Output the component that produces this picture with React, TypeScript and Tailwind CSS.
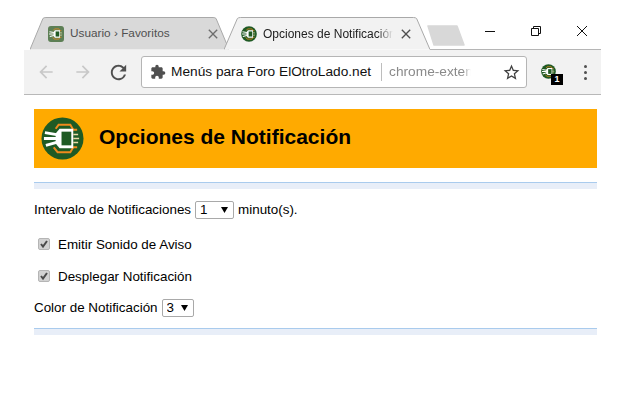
import React from "react";
import { MdArrowBack, MdArrowForward, MdClose, MdExtension, MdRefresh, MdStarBorder } from "react-icons/md";

function Logo({ size, rounded }: { size: number; rounded?: boolean }) {
  return (
    <svg width={size} height={size} viewBox="0 0 44 44" className="shrink-0">
      {rounded ? (
        <rect x="0" y="0" width="44" height="44" rx="8" fill="#5d7f55" />
      ) : (
        <circle cx="22" cy="22" r="21.5" fill="#1f5a24" />
      )}
      {/* orange wires */}
      <path d="M15 12 L18 8 H30 L33 13 H37" fill="none" stroke="#f08a1d" strokeWidth="2" />
      <path d="M13 31 L17 36 H30 L33 31 H37" fill="none" stroke="#f08a1d" strokeWidth="2" />
      {/* plug */}
      <path d="M19 12 H33 V32 H19 L15 27 V17 Z" fill="#fff" />
      <rect x="21" y="15" width="10" height="14" fill="#1f5a24" />
      <path d="M4 16 L16 18 M3 22 H16 M5 29 L16 26" stroke="#fff" strokeWidth="3" fill="none" />
      <path d="M33 18 H38 M33 22 H39 M33 26 H38" stroke="#e9d9a8" strokeWidth="1.5" fill="none" />
    </svg>
  );
}

function TabShape({ fill, stroke }: { fill: string; stroke: string }) {
  return (
    <svg className="absolute inset-0" width="100%" height="100%" viewBox="0 0 100 33" preserveAspectRatio="none">
      <path d="M0 32.5 L6.5 1.5 Q7 0.5 8 0.5 H92 Q93 0.5 93.5 1.5 L100 32.5" fill={fill} stroke={stroke} vectorEffect="non-scaling-stroke" />
    </svg>
  );
}

function SelectBox({ value, width }: { value: string; width: string }) {
  return (
    <span className={`relative inline-block h-[18px] ${width} shrink-0`}>
      <select
        defaultValue={value}
        className="appearance-none w-full h-full bg-white border border-[#a9a9a9] rounded-[2px] pl-[4px] text-[13.4px] leading-none text-black outline-none"
      >
        <option>{value}</option>
      </select>
      <svg className="absolute top-[6px] right-[6px] pointer-events-none" width="7" height="6" viewBox="0 0 7 6">
        <path d="M0 0 H7 L3.5 6 Z" fill="#000" />
      </svg>
    </span>
  );
}

function CheckRow({ label }: { label: string }) {
  return (
    <div className="flex items-center h-[16px]">
      <span className="ml-[4px] w-[12px] h-[12px] rounded-[2px] bg-[#d2d2d2] border border-[#b5b5b5] flex items-center justify-center">
        <svg width="10" height="10" viewBox="0 0 10 10">
          <path d="M2 5 L4 7.5 L8 2" fill="none" stroke="#4a4a4a" strokeWidth="2" />
        </svg>
      </span>
      <span className="ml-[8px] pt-[1px]">{label}</span>
    </div>
  );
}

function Rule() {
  return <div className="h-[7px] bg-[#e8eef8] border-t border-[#a9cbed]" />;
}

export default function App() {
  return (
    <div className="w-[640px] h-[400px] bg-white overflow-hidden font-['Liberation_Sans',Arial,sans-serif] text-black pl-[24px]">
      <div className="w-[577px] h-[400px] flex flex-col">
        {/* tab strip */}
        <div className="h-[50px] pt-[17px] flex items-stretch shrink-0 relative">
          <div className="relative w-[199px] ml-[6px] h-[33px] shrink-0">
            <TabShape fill="#d9d9d9" stroke="#a9a9a9" />
            <div className="relative flex items-center h-full pl-[18px] pr-[8px] text-[11.8px] text-[#505050]">
              <Logo size={16} rounded />
              <span className="ml-[6px] flex-1 whitespace-nowrap">Usuario › Favoritos</span>
              <MdClose size={16} className="text-[#6e6e6e]" />
            </div>
          </div>
          <div className="relative w-[206px] -ml-[5px] h-[33px] shrink-0">
            <TabShape fill="#f2f2f2" stroke="#a9a9a9" />
            <div className="relative flex items-center h-full pl-[17px] pr-[16px] text-[12px] text-[#222]">
              <Logo size={16} />
              <span className="ml-[6px] w-[130px] overflow-hidden whitespace-nowrap [mask-image:linear-gradient(to_right,black_88%,transparent)]">
                Opciones de Notificación
              </span>
              <span className="flex-1" />
              <MdClose size={16} className="text-[#505050]" />
            </div>
          </div>
          {/* new tab button */}
          <svg width="38" height="21" viewBox="0 0 38 21" className="mt-[8px] -ml-[3px] shrink-0">
            <path d="M1 1 H30 L37 20 H7 Z" fill="#d8d8d8" stroke="#d8d8d8" strokeLinejoin="round" strokeWidth="1.5" />
          </svg>
          <div className="flex-1" />
          {/* window controls */}
          <div className="flex items-start pr-[13px] text-[#111]">
            <svg width="12" height="12" viewBox="0 0 12 12" className="mt-[8px] mr-[34px]">
              <path d="M1 6.5 H11" stroke="#111" />
            </svg>
            <svg width="12" height="12" viewBox="0 0 12 12" className="mt-[8px] mr-[34px]">
              <path d="M1.5 3.5 H8.5 V10.5 H1.5 Z M3.5 3.5 V1.5 H10.5 V8.5 H8.5" fill="none" stroke="#111" />
            </svg>
            <svg width="12" height="12" viewBox="0 0 12 12" className="mt-[8px]">
              <path d="M1 1 L11 11 M11 1 L1 11" stroke="#111" />
            </svg>
          </div>
          {/* toolbar top line right of the active tab */}
          <div className="absolute left-[406px] right-0 bottom-0 h-px bg-[#b5b5b5]" />
        </div>

        {/* toolbar */}
        <div className="h-[45px] bg-[#f2f2f2] border-b border-[#b8b8b8] flex items-center shrink-0">
          <MdArrowBack size={20} className="ml-[12px] text-[#c8c8c8]" />
          <MdArrowForward size={20} className="ml-[17px] text-[#c8c8c8]" />
          <MdRefresh size={23} className="ml-[14px] text-[#505050]" />
          <div className="ml-[11px] w-[386px] h-[32px] bg-white border border-[#b5b5b5] rounded-[3px] flex items-center pl-[8px] pr-[5px]">
            <MdExtension size={16} className="text-[#505050]" />
            <span className="ml-[5px] text-[13.7px] text-[#111] whitespace-nowrap">Menús para Foro ElOtroLado.net</span>
            <span className="ml-[10px] w-px h-[18px] bg-[#bdbdbd]" />
            <span className="ml-[7px] text-[13.7px] text-[#8a8a8a] whitespace-nowrap w-[82px] overflow-hidden [mask-image:linear-gradient(to_right,black_90%,transparent)]">
              chrome-extension://
            </span>
            <span className="flex-1" />
            <MdStarBorder size={19} className="text-[#404040]" />
          </div>
          <div className="relative ml-[14px] w-[16px] h-[16px]">
            <Logo size={15} />
            <span className="absolute left-[10px] top-[10px] w-[12px] h-[11px] bg-black text-white text-[9px] font-bold leading-[11px] text-center">1</span>
          </div>
          <div className="ml-[27px] flex flex-col gap-[3px]">
            <span className="w-[3px] h-[3px] rounded-full bg-[#505050]" />
            <span className="w-[3px] h-[3px] rounded-full bg-[#505050]" />
            <span className="w-[3px] h-[3px] rounded-full bg-[#505050]" />
          </div>
        </div>

        {/* page content */}
        <div className="pl-[10px] pr-[4px] pt-[14px] text-[13.4px] leading-none">
          <div className="h-[59px] bg-[#ffaa00] flex items-center pl-[7px]">
            <Logo size={43} />
            <h1 className="ml-[15px] mb-[5px] text-[21px] font-bold">Opciones de Notificación</h1>
          </div>
          <div className="mt-[14px]">
            <Rule />
          </div>
          <div className="mt-[11px] flex items-center h-[20px]">
            <span>Intervalo de Notificaciones</span>
            <span className="ml-[4px]">
              <SelectBox value="1" width="w-[39px]" />
            </span>
            <span className="ml-[4px]">minuto(s).</span>
          </div>
          <div className="mt-[16px]">
            <CheckRow label="Emitir Sonido de Aviso" />
          </div>
          <div className="mt-[16px]">
            <CheckRow label="Desplegar Notificación" />
          </div>
          <div className="mt-[14px] flex items-center h-[20px]">
            <span>Color de Notificación</span>
            <span className="ml-[4px]">
              <SelectBox value="3" width="w-[32px]" />
            </span>
          </div>
          <div className="mt-[10px]">
            <Rule />
          </div>
        </div>
      </div>
    </div>
  );
}
